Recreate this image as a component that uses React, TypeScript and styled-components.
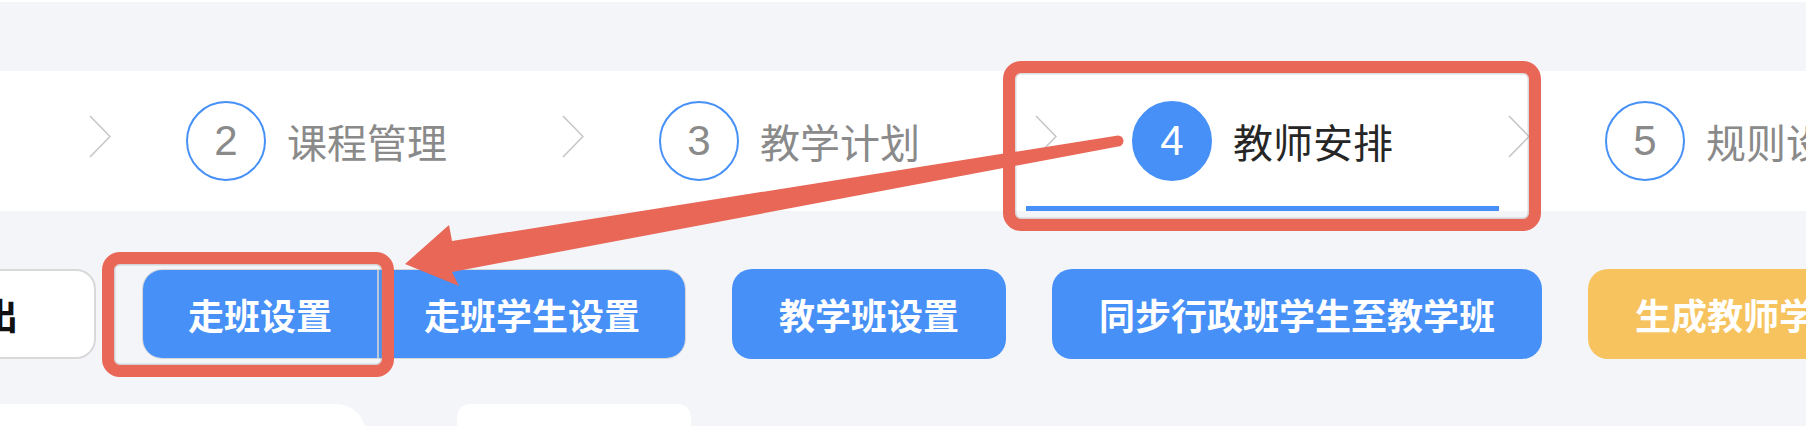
import React from "react";
import styled, { createGlobalStyle } from "styled-components";

const GlobalStyle = createGlobalStyle`
  html, body {
    margin: 0;
    padding: 0;
    background: #f4f5f9;
    overflow: hidden;
  }
  * { box-sizing: border-box; }
`;

const BLUE = "#4690f7";
const RED = "#e96757";
const CJK = `"Noto Sans CJK SC", "Noto Sans", sans-serif`;

const Page = styled.div`
  position: relative;
  width: 1806px;
  height: 426px;
  overflow: hidden;
  background: #f4f5f9;
  font-family: ${CJK};
`;

const TopBand = styled.div`
  height: 71px;
  border-top: 2px solid #ffffff;
  background: #f4f5f9;
`;

const Steps = styled.div`
  display: flex;
  height: 140px;
  background: #ffffff;
`;

const StepTrack = styled.div`
  display: flex;
  margin-left: -393px;
`;

const StepCell = styled.div<{ $active?: boolean }>`
  flex: 0 0 473px;
  width: 473px;
  height: 140px;
  display: flex;
  align-items: center;
  padding-left: 9px;
  padding-top: 5px;
  border-bottom: 5px solid ${(p) => (p.$active ? BLUE : "transparent")};
`;

const Chevron = styled.svg<{ $hidden?: boolean }>`
  flex: 0 0 22px;
  width: 22px;
  height: 43px;
  margin-bottom: 10px;
  margin-right: 75px;
  visibility: ${(p) => (p.$hidden ? "hidden" : "visible")};
`;

const StepCircle = styled.div<{ $active?: boolean }>`
  flex: 0 0 80px;
  width: 80px;
  height: 80px;
  border-radius: 50%;
  border: 2px solid ${BLUE};
  background: ${(p) => (p.$active ? BLUE : "#ffffff")};
  color: ${(p) => (p.$active ? "#ffffff" : "#8a8a8a")};
  display: flex;
  align-items: center;
  justify-content: center;
  font-family: "Liberation Sans", Arial, sans-serif;
  font-size: 42px;
  line-height: 1;
  margin-right: 21px;
`;

const StepLabel = styled.span<{ $active?: boolean }>`
  font-size: 40px;
  line-height: 1;
  white-space: nowrap;
  color: ${(p) => (p.$active ? "#262626" : "#8a8a8a")};
`;

const Toolbar = styled.div`
  display: flex;
  align-items: center;
  gap: 46px;
  margin-top: 58px;
  margin-left: -103px;
  height: 90px;
`;

const BaseButton = styled.div`
  height: 90px;
  display: flex;
  align-items: center;
  justify-content: center;
  white-space: nowrap;
  font-family: ${CJK};
  font-size: 36px;
  font-weight: 700;
  line-height: 1;
  flex: 0 0 auto;
`;

const PlainButton = styled(BaseButton)`
  background: #ffffff;
  color: #111111;
  border: 2px solid #d9d9d9;
  border-radius: 20px;
  padding: 0 76px 0 47px;
`;

const FillButton = styled(BaseButton)<{ $tone?: "blue" | "yellow" }>`
  background: ${(p) => (p.$tone === "yellow" ? "#f6c35f" : BLUE)};
  color: #ffffff;
  border-radius: 20px;
  padding: 0 47px;
`;

const Group = styled.div`
  display: flex;
  height: 90px;
  border: 1px solid #d6d6d6;
  border-radius: 20px;
  overflow: hidden;
  flex: 0 0 auto;
`;

const GroupButton = styled(BaseButton)<{ $first?: boolean }>`
  height: 88px;
  background: ${BLUE};
  color: #ffffff;
  padding: 0 45px;
  border-right: ${(p) => (p.$first ? "2px solid #b9c8de" : "none")};
`;

const Cards = styled.div`
  display: flex;
  gap: 91px;
  margin-top: 45px;
  margin-left: -100px;
`;

const Card = styled.div<{ $w: number; $r: number }>`
  width: ${(p) => p.$w}px;
  height: 60px;
  background: #ffffff;
  border-radius: ${(p) => p.$r}px ${(p) => p.$r}px 0 0;
  flex: 0 0 auto;
`;

const Highlight = styled.div<{ $x: number; $y: number; $w: number; $h: number }>`
  position: absolute;
  left: ${(p) => p.$x}px;
  top: ${(p) => p.$y}px;
  width: ${(p) => p.$w}px;
  height: ${(p) => p.$h}px;
  border: 12px solid ${RED};
  border-radius: 18px;
  box-shadow: inset 0 0 0 1.5px rgba(150, 150, 150, 0.35);
  pointer-events: none;
`;

const ArrowLayer = styled.svg`
  position: absolute;
  left: 0;
  top: 0;
  width: 1806px;
  height: 426px;
  pointer-events: none;
`;

const steps = [
  { n: 1, label: "基础设置" },
  { n: 2, label: "课程管理" },
  { n: 3, label: "教学计划" },
  { n: 4, label: "教师安排", active: true },
  { n: 5, label: "规则设置" },
];

function ChevronIcon({ hidden }: { hidden?: boolean }) {
  return (
    <Chevron $hidden={hidden} viewBox="0 0 22 43">
      <polyline
        points="1,1 21,21.5 1,42"
        fill="none"
        stroke="#c6c6c6"
        strokeWidth="1.6"
      />
    </Chevron>
  );
}

export default function App() {
  return (
    <>
      <GlobalStyle />
      <Page>
        <TopBand />
        <Steps>
          <StepTrack>
            {steps.map((s, i) => (
              <StepCell key={s.n} $active={s.active}>
                <ChevronIcon hidden={i === 0} />
                <StepCircle $active={s.active}>{s.n}</StepCircle>
                <StepLabel $active={s.active}>{s.label}</StepLabel>
              </StepCell>
            ))}
          </StepTrack>
        </Steps>
        <Toolbar>
          <PlainButton>导出</PlainButton>
          <Group>
            <GroupButton $first>走班设置</GroupButton>
            <GroupButton>走班学生设置</GroupButton>
          </Group>
          <FillButton>教学班设置</FillButton>
          <FillButton>同步行政班学生至教学班</FillButton>
          <FillButton $tone="yellow">生成教师学生课表</FillButton>
        </Toolbar>
        <Cards>
          <Card $w={466} $r={30} />
          <Card $w={234} $r={13} />
        </Cards>

        <Highlight $x={1003} $y={61} $w={538} $h={170} />
        <Highlight $x={102} $y={252} $w={292} $h={125} />

        <ArrowLayer viewBox="0 0 1806 426">
          <path
            d="M1118,135.5 L452,241 L449,225 L405,264 L459,286 L452,272 L1118,146.5 A5.5,5.5 0 0 0 1118,135.5 Z"
            fill={RED}
            strokeLinejoin="round"
          />
        </ArrowLayer>
      </Page>
    </>
  );
}
